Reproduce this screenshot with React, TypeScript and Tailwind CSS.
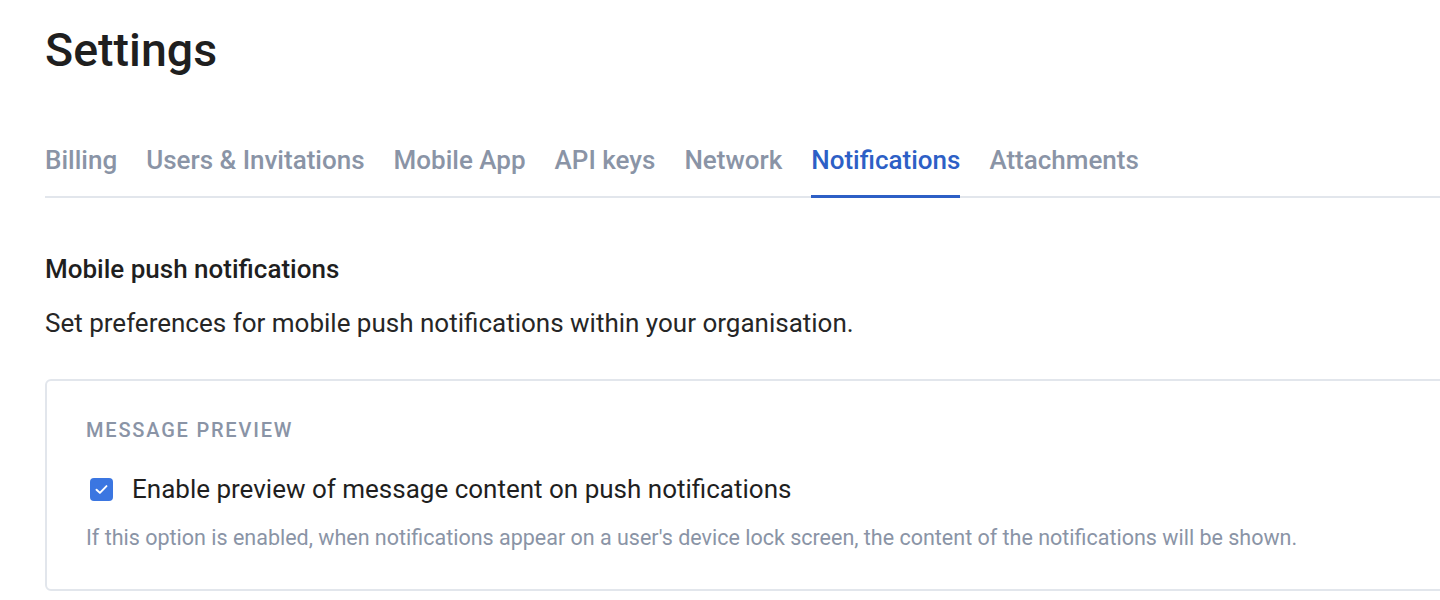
import React from "react";

const tabs = [
  "Billing",
  "Users & Invitations",
  "Mobile App",
  "API keys",
  "Network",
  "Notifications",
  "Attachments",
];

export default function App() {
  return (
    <div
      className="w-[1440px] h-[600px] overflow-hidden bg-white"
      style={{ fontFamily: "Roboto, 'Noto Sans', Arial, sans-serif" }}
    >
      <div className="w-[1480px] pl-[45px]">
        <h1 className="pt-[22px] text-[46.5px] leading-[56px] font-medium text-[#1f1f1f]">
          Settings
        </h1>
        <div className="mt-[66px] flex gap-[29px] border-b-2 border-[#e2e6ec]">
          {tabs.map((t) => {
            const active = t === "Notifications";
            return (
              <div
                key={t}
                className={
                  active
                    ? "-mb-[2px] border-b-[3px] border-[#2d5fc6] pb-[19px] text-[26px] leading-[32px] font-medium text-[#2d5fc6]"
                    : "-mb-[2px] border-b-[3px] border-transparent pb-[19px] text-[26px] leading-[32px] font-medium text-[#8a94a6]"
                }
              >
                {t}
              </div>
            );
          })}
        </div>
        <h2 className="mt-[57px] text-[26px] leading-[28px] font-medium text-[#1f1f1f]">
          Mobile push notifications
        </h2>
        <p className="mt-[26px] text-[26px] leading-[28px] text-[#262626]">
          Set preferences for mobile push notifications within your organisation.
        </p>
        <div className="mt-[42px] rounded-[6px] border-2 border-[#e2e6ec] pl-[39px] pt-[37px] pb-[39px]">
          <div className="text-[20px] leading-[24px] font-medium tracking-[0.09em] text-[#8a94a6]">
            MESSAGE PREVIEW
          </div>
          <label className="mt-[31px] flex items-center gap-[19px]">
            <span className="ml-[4px] flex h-[23px] w-[23px] items-center justify-center rounded-[4px] bg-[#3b76e1]">
              <svg width="17" height="17" viewBox="0 0 16 16" fill="none">
                <path
                  d="M3.3 8.2 L6.5 11.2 L12.7 4.8"
                  stroke="white"
                  strokeWidth="1.8"
                  strokeLinecap="round"
                  strokeLinejoin="round"
                />
              </svg>
            </span>
            <span className="text-[26px] leading-[32px] text-[#1f1f1f]">
              Enable preview of message content on push notifications
            </span>
          </label>
          <p className="mt-[21px] text-[21.5px] leading-[24px] text-[#8a94a6]">
            If this option is enabled, when notifications appear on a user's device lock screen, the content of the notifications will be shown.
          </p>
        </div>
      </div>
    </div>
  );
}
